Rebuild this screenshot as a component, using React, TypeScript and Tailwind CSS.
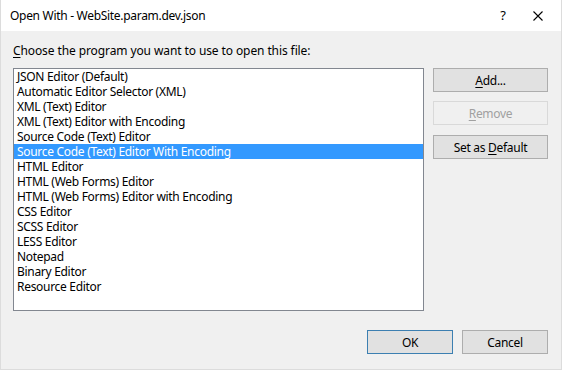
const items = [
  "JSON Editor (Default)",
  "Automatic Editor Selector (XML)",
  "XML (Text) Editor",
  "XML (Text) Editor with Encoding",
  "Source Code (Text) Editor",
  "Source Code (Text) Editor With Encoding",
  "HTML Editor",
  "HTML (Web Forms) Editor",
  "HTML (Web Forms) Editor with Encoding",
  "CSS Editor",
  "SCSS Editor",
  "LESS Editor",
  "Notepad",
  "Binary Editor",
  "Resource Editor",
];

const selected = 5;

const Btn = ({children, disabled, primary}: {children: React.ReactNode; disabled?: boolean; primary?: boolean}) => (
  <div
    className={
      "h-6 flex items-center justify-center border " +
      (disabled
        ? "bg-[#f0f0f0] border-[#d9d9d9] text-[#a0a0a0]"
        : primary
        ? "bg-[#e1e1e1] border-[#3c7fb1] text-black"
        : "bg-[#e1e1e1] border-[#adadad] text-black")
    }>
    {children}
  </div>
);

export default function App() {
  return (
    <div className="w-[562px] h-[370px] flex flex-col bg-[#f0f0f0] border-x border-b border-[#dcdcdc] font-['Noto_Sans',sans-serif] text-[12px] leading-[15px] tracking-[-0.3px] text-black overflow-hidden">
      <div className="h-[31px] bg-white flex items-center pl-[9px] shrink-0">
        <span className="grow">Open With - WebSite.param.dev.json</span>
        <span className="w-[30px] text-center text-[13px] mr-[15px]">?</span>
        <svg width="10" height="10" viewBox="0 0 10 10" className="mr-[18px]">
          <path d="M0.5 0.5L9.5 9.5M9.5 0.5L0.5 9.5" stroke="#000" strokeWidth="1.1" />
        </svg>
      </div>
      <div className="flex flex-col pl-[12px] pr-[13px] pt-[12px]">
        <div className="tracking-[-0.1px]">
          <span className="underline underline-offset-2">C</span>hoose the program you want to use to open this file:
        </div>
        <div className="flex mt-[10px] gap-[9px]">
          <div className="w-[411px] h-[243px] bg-white border border-[#828790]">
            {items.map((it, i) => (
              <div
                key={it}
                className={
                  "h-[15px] pl-[3px] whitespace-nowrap " +
                  (i === selected ? "bg-[#3399ff] text-white" : "")
                }>
                {it}
              </div>
            ))}
          </div>
          <div className="w-[115px] flex flex-col">
            <Btn>
              <span><span className="underline underline-offset-2">A</span>dd...</span>
            </Btn>
            <div className="mt-[9px]">
              <Btn disabled>
                <span><span className="underline underline-offset-2">R</span>emove</span>
              </Btn>
            </div>
            <div className="mt-[10px]">
              <Btn>
                <span>Set as <span className="underline underline-offset-2">D</span>efault</span>
              </Btn>
            </div>
          </div>
        </div>
        <div className="flex justify-end gap-[9px] mt-[19px]">
          <div className="w-[86px]">
            <Btn primary>OK</Btn>
          </div>
          <div className="w-[86px]">
            <Btn>Cancel</Btn>
          </div>
        </div>
      </div>
    </div>
  );
}
